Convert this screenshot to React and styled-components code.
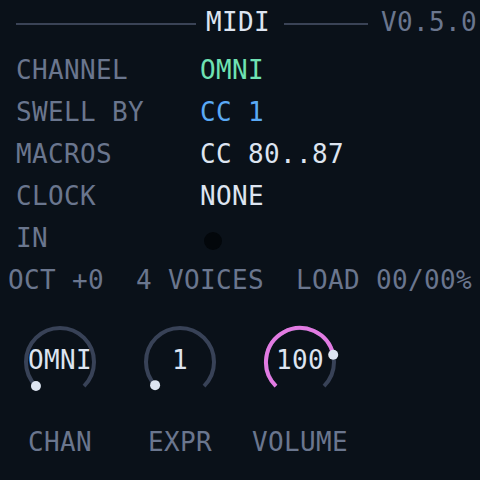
import React from "react";
import styled, { createGlobalStyle } from "styled-components";

const Global = createGlobalStyle`
  html, body { margin: 0; padding: 0; background: #0a1119; }
  body { width: 480px; height: 480px; overflow: hidden; }
`;

const Page = styled.div`
  width: 480px;
  height: 480px;
  box-sizing: border-box;
  padding-top: 1px;
  background: #0a1119;
  font-family: "DejaVu Sans Mono", "Liberation Mono", monospace;
  font-size: 26px;
  letter-spacing: 0.35px;
  line-height: 42px;
  color: #dde4f0;
`;

const Header = styled.div`
  display: flex;
  align-items: center;
  height: 42px;
  margin-bottom: 6px;
`;

const Rule = styled.div`
  height: 2px;
  background: #3a4356;
  width: ${(p) => p.$w}px;
  margin-left: ${(p) => p.$ml}px;
  margin-right: ${(p) => p.$mr}px;
  margin-top: 3px;
`;

const Title = styled.span`
  color: ${(p) => p.$c};
  white-space: pre;
`;

const Row = styled.div`
  display: flex;
  align-items: center;
  height: 42px;
  padding-left: 16px;
`;

const Label = styled.span`
  width: 184px;
  color: #6a768e;
  white-space: pre;
`;

const Value = styled.span`
  color: ${(p) => p.$c || "#dde4f0"};
  white-space: pre;
`;

const Led = styled.span`
  display: block;
  width: 18px;
  height: 18px;
  border-radius: 50%;
  background: #03070b;
  margin-left: 4px;
  margin-top: 5px;
`;

const Status = styled.div`
  height: 42px;
  padding-left: 8px;
  color: #6a768e;
  white-space: pre;
`;

const Knobs = styled.div`
  display: flex;
`;

const KnobCell = styled.div`
  width: 120px;
  display: flex;
  flex-direction: column;
  align-items: center;
  padding-top: 21px;
`;

const Dial = styled.div`
  position: relative;
  width: 80px;
  height: 80px;
`;

const DialText = styled.div`
  position: absolute;
  left: -10px;
  right: -10px;
  top: 17px;
  text-align: center;
  color: #dde4f0;
  white-space: pre;
`;

const KnobLabel = styled.div`
  margin-top: 19px;
  color: #6a768e;
  white-space: pre;
`;

const C = 40;
const R = 34;
const pt = (deg) => {
  const a = (deg * Math.PI) / 180;
  return [C + R * Math.cos(a), C - R * Math.sin(a)];
};
const arc = (from, to) => {
  const [x1, y1] = pt(from);
  const [x2, y2] = pt(to);
  const large = from - to > 180 ? 1 : 0;
  return `M ${x1} ${y1} A ${R} ${R} 0 ${large} 1 ${x2} ${y2}`;
};

function Knob({ text, label, frac, color }) {
  const end = 225 - frac * 270;
  const [dx, dy] = pt(end);
  return (
    <KnobCell>
      <Dial>
        <svg width="80" height="80" viewBox="0 0 80 80">
          <path d={arc(225, -45)} fill="none" stroke="#384257" strokeWidth="4" />
          {color && frac > 0 && (
            <path d={arc(225, end)} fill="none" stroke={color} strokeWidth="4" />
          )}
          <circle cx={dx} cy={dy} r="5" fill="#dde5f2" />
        </svg>
        <DialText>{text}</DialText>
      </Dial>
      <KnobLabel>{label}</KnobLabel>
    </KnobCell>
  );
}

export default function App() {
  return (
    <>
      <Global />
      <Page>
        <Header>
          <Rule $w={180} $ml={16} $mr={10} />
          <Title $c="#dde4f0">MIDI</Title>
          <Rule $w={84} $ml={14} $mr={13} />
          <Title $c="#6a768e">V0.5.0</Title>
        </Header>
        <Row>
          <Label>CHANNEL</Label>
          <Value $c="#6fe2b3">OMNI</Value>
        </Row>
        <Row>
          <Label>SWELL BY</Label>
          <Value $c="#5aa9f4">CC 1</Value>
        </Row>
        <Row>
          <Label>MACROS</Label>
          <Value>CC 80..87</Value>
        </Row>
        <Row>
          <Label>CLOCK</Label>
          <Value>NONE</Value>
        </Row>
        <Row>
          <Label>IN</Label>
          <Led />
        </Row>
        <Status>{"OCT +0  4 VOICES  LOAD 00/00%"}</Status>
        <Knobs>
          <Knob text="OMNI" label="CHAN" frac={0} />
          <Knob text="1" label="EXPR" frac={1 / 127} />
          <Knob text="100" label="VOLUME" frac={100 / 127} color="#e27be2" />
        </Knobs>
      </Page>
    </>
  );
}
